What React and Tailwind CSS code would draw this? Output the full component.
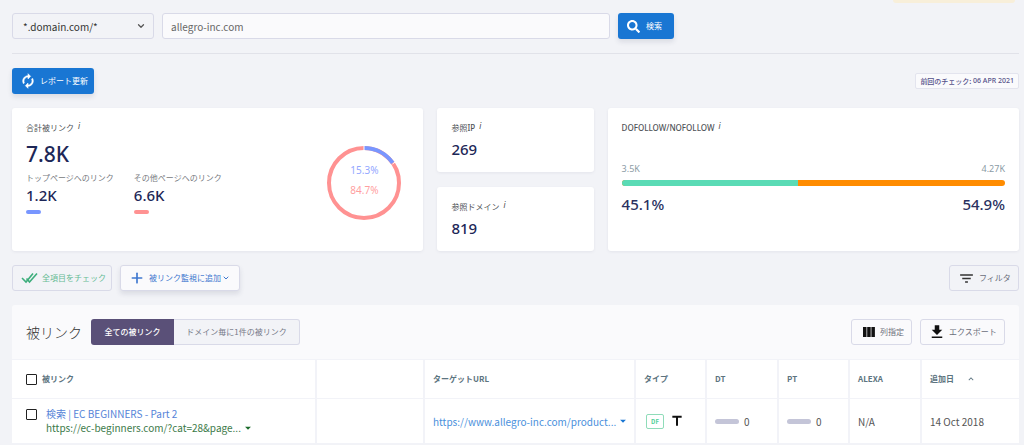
import React from "react";
import { ChevronDown, Plus } from "lucide-react";
import { FaSearch } from "react-icons/fa";
import { MdFilterList, MdFileDownload, MdTitle, MdKeyboardArrowUp, MdArrowDropDown } from "react-icons/md";

const outlined = "flex h-[26px] items-center rounded-[3px] border border-[#d9dae8] text-[8px]";

const Info = () => (
  <i className="ml-1 self-start font-['Noto_Sans'] text-[8px] leading-[8px] text-[#444]">i</i>
);

const Card = ({ className = "", children }) => (
  <section className={`rounded-[3px] bg-white px-3.5 shadow-[0_1px_3px_rgba(60,60,100,0.08)] ${className}`}>
    {children}
  </section>
);

const Label = ({ children }) => (
  <h2 className="flex h-3 items-center text-[8px] leading-3 text-[#4f5357]">
    {children}
    <Info />
  </h2>
);

const SmallStat = ({ label, value }) => (
  <Card className="h-16 pt-3.5">
    <Label>{label}</Label>
    <p className="mt-[5px] font-['Noto_Sans'] text-[15px] leading-5 font-medium text-[#1d2757]">{value}</p>
  </Card>
);

const LinkStat = ({ label, value, bar }) => (
  <div>
    <p className="text-[8px] leading-3 text-[#777a80]">{label}</p>
    <p className="mt-px font-['Noto_Sans'] text-[15px] leading-5 font-medium text-[#1d2757]">{value}</p>
    <div className={`mt-[5px] h-1 w-[15px] rounded-full ${bar}`} />
  </div>
);

const Donut = () => (
  <div className="mt-[7px] grid place-items-center">
    <svg viewBox="0 0 76 76" className="col-start-1 row-start-1 size-[76px] -rotate-90" fill="none" strokeWidth="4">
      <circle cx="38" cy="38" r="35" stroke="#ff9292" />
      <circle cx="38" cy="38" r="35" stroke="#7896ff" pathLength="100" strokeDasharray="15.3 84.7" />
      <path d="M71 38h4M57 66.5l2.4 3.3" stroke="#fff" strokeWidth="1" />
    </svg>
    <div className="col-start-1 row-start-1 pb-1.5 text-center font-['Noto_Sans'] text-[10px] leading-5">
      <p className="text-[#94a8ff]">15.3%</p>
      <p className="text-[#ff9f9f]">84.7%</p>
    </div>
  </div>
);

const Refresh = () => (
  <svg viewBox="0 0 24 24" className="size-4" fill="#fff" stroke="#fff" strokeWidth="0.8">
    <path d="M12 6v3l4-4-4-4v3c-4.420 0-8 3.580-8 8 0 1.570.46 3.030 1.240 4.260L6.700 14.800c-.45-.83-.7-1.790-.7-2.800 0-3.310 2.690-6 6-6z" />
    <path d="M18.760 7.740L17.300 9.200c.44.84.7 1.790.7 2.800 0 3.310-2.690 6-6 6v-3l-4 4 4 4v-3c4.420 0 8-3.580 8-8 0-1.570-.46-3.030-1.240-4.260z" />
  </svg>
);

const DoubleCheck = () => (
  <svg viewBox="0 0 17 12" className="h-3 w-[17px]" fill="none" stroke="#3dae7c" strokeWidth="1.6">
    <path d="M1 6l4 4 7-8.500M5.500 6.500L8.500 10 16 1.500" />
  </svg>
);

const Columns = () => (
  <svg viewBox="0 0 14 12" className="h-3 w-3.5" fill="#111">
    <path d="M1 1h3.500v10H1zM5.200 1h3.500v10H5.200zM9.400 1h3.500v10H9.400z" />
  </svg>
);

const Score = () => (
  <div className="flex items-center gap-[5px]">
    <span className="h-[5px] w-6 rounded-full bg-[#c4c5d8]" />
    <span>0</span>
  </div>
);

const th = "border-r-2 border-b border-[#f2f3f8] px-2 text-left font-bold last:border-r-0";
const td = "border-r-2 border-b border-[#f2f3f8] px-2 last:border-r-0";

const App = () => {
  return (
    <main className="flex min-h-screen flex-col bg-[#f2f3f7] pr-[5px] pl-3 font-['Noto_Sans_CJK_JP',sans-serif]">
      <div className="mr-1 h-[3px] w-[122px] self-end rounded-b-full bg-[#f8efda]" />

      <form className="mt-2.5 flex h-[26px] items-stretch gap-2" onSubmit={(e) => e.preventDefault()}>
        <div className="grid w-[142px] items-center">
          <select
            aria-label="ドメイン"
            className="col-start-1 row-start-1 h-[26px] appearance-none rounded-[3px] border border-[#d9dae8] pl-2.5 text-[10px] text-[#333]"
          >
            <option>*.domain.com/*</option>
          </select>
          <ChevronDown strokeWidth={3} className="pointer-events-none col-start-1 row-start-1 mr-2 size-2.5 justify-self-end text-[#555]" />
        </div>
        <input
          aria-label="URL"
          defaultValue="allegro-inc.com"
          className="w-[448px] rounded-[3px] border border-[#d9dae8] bg-[#fafafc] px-2 text-[10px] text-[#666]"
        />
        <button className="flex w-14 items-center gap-1.5 rounded-[3px] bg-[#1976d3] pl-[9px] text-[8px] text-white shadow-[0_3px_5px_rgba(50,60,90,0.12)]">
          <FaSearch className="size-[13px]" />
          検索
        </button>
      </form>

      <hr className="mt-3.5 border-[#e1e2e9]" />

      <div className="mt-3.5 flex items-center justify-between">
        <button className="flex h-[26px] w-[82px] items-center gap-1 rounded-[3px] bg-[#1976d3] pl-2 text-[8px] text-white shadow-[0_3px_5px_rgba(50,60,90,0.12)]">
          <Refresh />
          レポート更新
        </button>
        <p className="flex h-4 items-center rounded-[2px] border border-[#e3e4ee] bg-[#fafafc] px-1 text-[7px] font-medium whitespace-pre text-[#54518a]">
          前回のチェック: <span className="font-['Noto_Sans']">06 APR 2021</span>
        </p>
      </div>

      <div className="mt-3.5 grid grid-cols-[411fr_156fr_411fr] gap-3.5">
        <Card className="flex items-center justify-between pr-[21px]">
          <div className="h-full pt-3.5">
            <Label>合計被リンク</Label>
            <p className="mt-2 font-['Noto_Sans'] text-[21px] leading-6 font-medium text-[#1d2757]">7.8K</p>
            <div className="mt-1.5 flex gap-5">
              <LinkStat label="トップページへのリンク" value="1.2K" bar="bg-[#7896ff]" />
              <LinkStat label="その他ページへのリンク" value="6.6K" bar="bg-[#ff9292]" />
            </div>
          </div>
          <Donut />
        </Card>
        <div className="flex flex-col gap-[15px]">
          <SmallStat label={<>参照<span className="font-['Noto_Sans'] font-medium">IP</span></>} value="269" />
          <SmallStat label="参照ドメイン" value="819" />
        </div>
        <Card className="pt-3.5">
          <Label>
            <span className="font-['Noto_Sans'] font-medium">DOFOLLOW/NOFOLLOW</span>
          </Label>
          <div className="mt-[27px] flex justify-between font-['Noto_Sans'] text-[9px] leading-4 text-[#8c9ba5]">
            <span>3.5K</span>
            <span>4.27K</span>
          </div>
          <div className="mt-[3px] flex h-1.5 overflow-hidden rounded-full bg-[#ff8c00]">
            <div className="w-[46%] bg-[#5adbb5]" />
          </div>
          <div className="mt-2 flex justify-between font-['Noto_Sans'] text-[15px] leading-5 font-medium text-[#2a3160]">
            <span>45.1%</span>
            <span>54.9%</span>
          </div>
        </Card>
      </div>

      <div className="mt-3.5 flex gap-2">
        <button className={`${outlined} w-[100px] gap-1 pl-2 text-[#66bb94]`}>
          <DoubleCheck />
          全項目をチェック
        </button>
        <button className={`${outlined} w-[120px] bg-[#fafafc] pl-2 text-[#3f78cf] shadow-[0_3px_5px_rgba(50,60,90,0.12)]`}>
          <Plus strokeWidth={2.5} className="mr-1 size-4" />
          被リンク監視に追加
          <ChevronDown strokeWidth={3} className="ml-px size-2" />
        </button>
        <button className={`${outlined} ml-auto w-[70px] gap-1 pl-2 text-[#6b6e7b]`}>
          <MdFilterList className="size-[17px] text-[#333]" />
          フィルタ
        </button>
      </div>

      <section className="mt-3.5 rounded-t-[3px] bg-[#fafafc]">
        <header className="flex h-[54px] items-center px-3.5">
          <h1 className="w-[65px] text-[14px] font-light text-[#333]">被リンク</h1>
          <button className="h-[26px] w-[83px] rounded-l-[3px] bg-[#5a5078] text-[8px] font-medium text-white">
            全ての被リンク
          </button>
          <button className="h-[26px] w-[126px] rounded-r-[3px] border border-l-0 border-[#d9dae8] bg-[#f2f3f7] text-[8px] text-[#777a88]">
            ドメイン毎に1件の被リンク
          </button>
          <button className={`${outlined} ml-auto w-[61px] gap-1 pl-2.5 text-[#6b6e7b]`}>
            <Columns />
            列指定
          </button>
          <button className={`${outlined} ml-2 w-[85px] gap-[3px] pl-[7px] text-[#6b6e7b]`}>
            <MdFileDownload className="size-[18px] text-[#111]" />
            エクスポート
          </button>
        </header>

        <table className="w-full table-fixed border-separate border-spacing-0 border-t border-[#f2f3f8] bg-white">
          <colgroup>
            <col />
            <col className="w-[108px]" />
            <col className="w-[211px]" />
            <col className="w-[71px]" />
            <col className="w-[72px]" />
            <col className="w-[71px]" />
            <col className="w-[72px]" />
            <col className="w-[97px]" />
          </colgroup>
          <thead className="text-[8px] text-[#5d7480]">
            <tr className="h-[39px]">
              <th className={`${th} pl-3.5`}>
                <label className="flex items-center gap-[5px]">
                  <input type="checkbox" className="size-[11px] appearance-none rounded-[1px] border border-[#222]" />
                  被リンク
                </label>
              </th>
              <th className={th} />
              <th className={th}>ターゲットURL</th>
              <th className={th}>タイプ</th>
              <th className={th}>DT</th>
              <th className={th}>PT</th>
              <th className={th}>ALEXA</th>
              <th className={th}>
                <button className="flex items-center gap-3 font-bold">
                  追加日
                  <MdKeyboardArrowUp className="size-2.5" />
                </button>
              </th>
            </tr>
          </thead>
          <tbody className="text-[10px] text-[#555]">
            <tr className="h-[45px]">
              <td className={`${td} pl-3.5`}>
                <div className="flex gap-[9px]">
                  <input
                    type="checkbox"
                    aria-label="検索 | EC BEGINNERS - Part 2"
                    className="mt-0.5 size-[11px] appearance-none rounded-[1px] border border-[#222]"
                  />
                  <div className="leading-[14px]">
                    <a href="#title" className="block text-[#5584d8]">検索 | EC BEGINNERS - Part 2</a>
                    <a href="#source" className="flex items-center text-[#3c7a49]">
                      https://ec-beginners.com/?cat=28&amp;page...
                      <MdArrowDropDown className="size-3.5 shrink-0 text-[#1b6b2a]" />
                    </a>
                  </div>
                </div>
              </td>
              <td className={td} />
              <td className={td}>
                <a href="#target" className="flex items-center whitespace-nowrap text-[#4a90dc]">
                  https://www.allegro-inc.com/product...
                  <MdArrowDropDown className="size-3.5 shrink-0 text-[#1976d3]" />
                </a>
              </td>
              <td className={td}>
                <div className="flex items-center gap-[5px] pl-0.5">
                  <span className="flex h-[15px] w-[18px] items-center justify-center rounded-[2px] border border-[#8fdcb9] text-[6px] font-bold text-[#4fcf97]">
                    DF
                  </span>
                  <MdTitle className="size-4 text-[#111]" />
                </div>
              </td>
              <td className={td}><Score /></td>
              <td className={td}><Score /></td>
              <td className={td}>N/A</td>
              <td className={td}>14 Oct 2018</td>
            </tr>
          </tbody>
        </table>
      </section>
    </main>
  );
};

export default App;
